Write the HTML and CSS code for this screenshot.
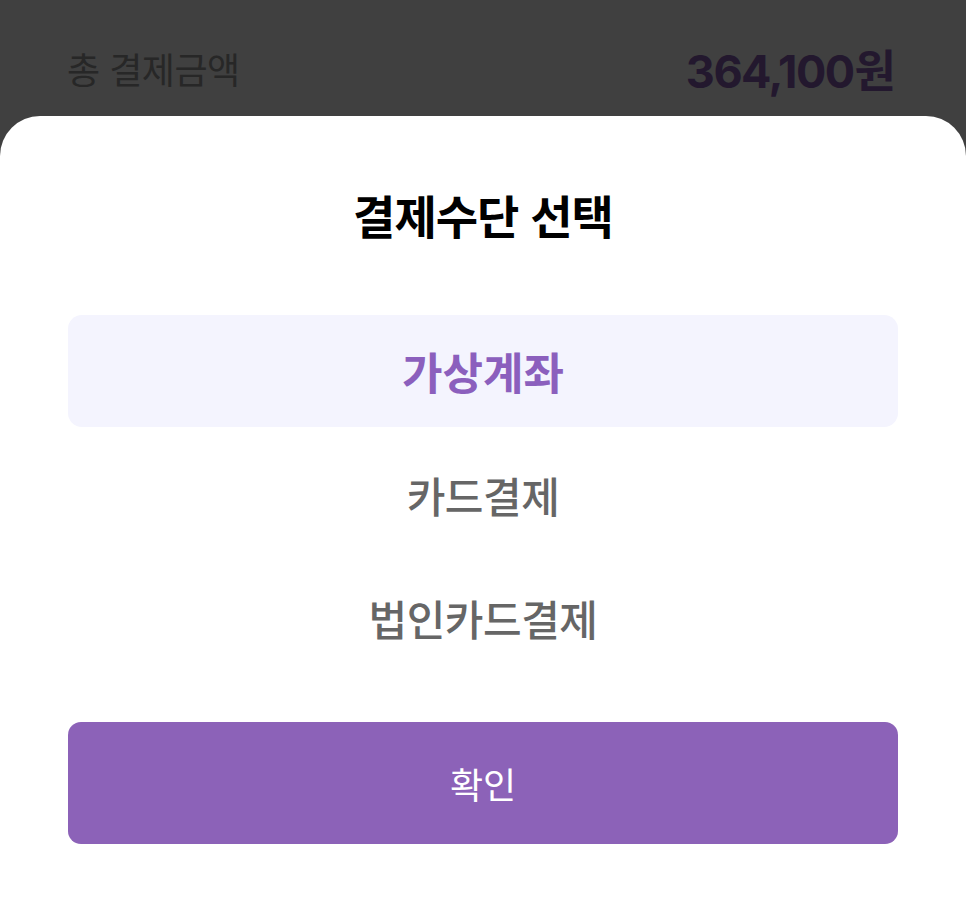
FILE: index.html
```html
<!DOCTYPE html>
<html lang="ko">
<head>
<meta charset="utf-8">
<title>결제수단 선택</title>
<link rel="stylesheet" href="styles.css">
</head>
<body>
  <div class="page">
    <header class="summary">
      <span class="summary-label">총 결제금액</span>
      <span class="summary-amount">364,100<span class="won">원</span></span>
    </header>
    <section class="sheet">
      <h1 class="sheet-title">결제수단 선택</h1>
      <ul class="methods">
        <li class="method method--selected">가상계좌</li>
        <li class="method">카드결제</li>
        <li class="method">법인카드결제</li>
      </ul>
      <button class="confirm" type="button">확인</button>
    </section>
  </div>
</body>
</html>
```
FILE: styles.css
```css
* { box-sizing: border-box; }

html, body {
  margin: 0;
  padding: 0;
}

body {
  background: #404040;
  font-family: "Noto Sans CJK KR", "Noto Sans", sans-serif;
}

.page {
  display: flex;
  flex-direction: column;
  height: 912px;
}

.summary {
  height: 116px;
  padding: 20px 70px 0 67px;
  display: flex;
  align-items: center;
  justify-content: space-between;
}

.summary-label {
  font-size: 36px;
  font-weight: 400;
  letter-spacing: -0.5px;
  color: #272727;
}

.summary-amount {
  font-family: "Inter", "Noto Sans CJK KR", sans-serif;
  font-size: 45px;
  font-weight: 700;
  letter-spacing: -1.5px;
  color: #23182e;
}

.won {
  font-family: "Noto Sans CJK KR", sans-serif;
  font-weight: 700;
  letter-spacing: 0;
  margin-left: 1px;
}

.sheet {
  flex: 1;
  background: #ffffff;
  border-radius: 40px 40px 0 0;
  padding: 68px 68px 0;
  display: flex;
  flex-direction: column;
}

.sheet-title {
  margin: 0;
  height: 60px;
  line-height: 60px;
  text-align: center;
  font-size: 46px;
  font-weight: 700;
  letter-spacing: -1px;
  color: #000000;
}

.methods {
  list-style: none;
  margin: 71px 0 0;
  padding: 0;
  display: flex;
  flex-direction: column;
  gap: 11px;
}

.method {
  height: 112px;
  display: flex;
  align-items: center;
  justify-content: center;
  border-radius: 14px;
  font-size: 42px;
  font-weight: 500;
  letter-spacing: -0.5px;
  color: #666666;
}

.method--selected {
  background: #f4f4fe;
  color: #8b5fbd;
  font-size: 44px;
  font-weight: 700;
  letter-spacing: 0;
}

.confirm {
  margin-top: 49px;
  height: 122px;
  width: 100%;
  border: none;
  border-radius: 13px;
  background: #8c62b8;
  color: #ffffff;
  font-family: "Noto Sans CJK KR", sans-serif;
  font-size: 36px;
  font-weight: 400;
  letter-spacing: 0;
}
```
